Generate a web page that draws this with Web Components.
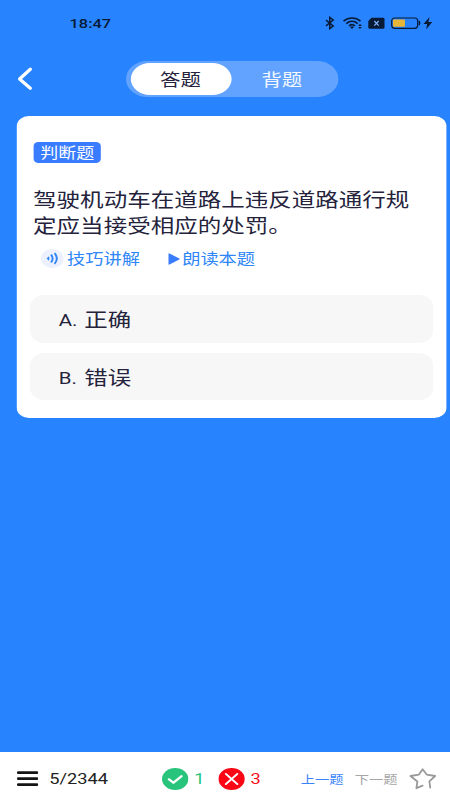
<!DOCTYPE html>
<html lang="zh-CN">
<head>
<meta charset="utf-8">
<meta name="viewport" content="width=device-width, initial-scale=1">
<title>答题</title>
<style>
  html, body { margin: 0; height: 100%; overflow: hidden; background: #2883ff; }
</style>
</head>
<body>
<quiz-screen>
  <status-bar time="18:47"></status-bar>
  <quiz-header></quiz-header>
  <question-card kind="判断题">
    驾驶机动车在道路上违反道路通行规定应当接受相应的处罚。
    <answer-option slot="answers" letter="A.">正确</answer-option>
    <answer-option slot="answers" letter="B.">错误</answer-option>
  </question-card>
  <quiz-footer slot="footer" progress="5/2344" right="1" wrong="3"></quiz-footer>
</quiz-screen>

<script>
(() => {
  const define = (name, render) => {
    customElements.define(name, class extends HTMLElement {
      connectedCallback() {
        if (this.shadowRoot) return;
        this.attachShadow({ mode: 'open' }).innerHTML = render(this);
      }
    });
  };

  // 375px layout, widened to fill a 450px viewport
  define('quiz-screen', () => `
    <style>
      :host {
        display: flex;
        flex-direction: column;
        width: 375px;
        height: 800px;
        transform: scaleX(1.2);
        transform-origin: 0 0;
        font-family: Roboto, "Noto Sans CJK SC", sans-serif;
        color: #25233c;
        background: #2883ff;
      }
      main { flex: 1; min-height: 0; }
    </style>
    <main><slot></slot></main>
    <slot name="footer"></slot>
  `);

  define('status-bar', (el) => `
    <style>
      :host {
        display: flex;
        align-items: center;
        justify-content: space-between;
        height: 46px;
        box-sizing: border-box;
        padding: 0 13.3px 0 58px;
        color: #071a36;
      }
      .time { font-size: 13.6px; font-weight: 500; line-height: 16px; }
      svg { display: block; width: 91.67px; height: 14px; }
    </style>
    <span class="time">${el.getAttribute('time')}</span>
    <svg viewBox="0 0 110 14" preserveAspectRatio="none" fill="none" stroke="currentColor" aria-hidden="true">
      <path d="M2 4.2 9.2 10 5.8 12.6V1.4L9.2 4 2 9.8" stroke-width="1.5"/>
      <path d="M19.5 5.2c5-4.3 12.2-4.3 17 0M22.3 7.6c3.5-2.9 8-2.9 11.4 0M25 9.9c2-1.6 4.2-1.6 6 0" stroke-width="1.7"/>
      <path d="m28 13-2-2c1.2-1 2.8-1 4 0ZM34.2 9.9 36 7.8l1.800 2.100ZM34.200 10.900 36 13l1.800-2.100Z" fill="currentColor" stroke="none"/>
      <path d="M47.5 1.800H59q1.500 0 1.500 1.400v8q0 1.500-1.500 1.500H46q-1.700 0-1.700-1.500V5Z" fill="currentColor" stroke="none"/>
      <path d="m50.300 5 4.400 4.600M54.700 5l-4.400 4.600" stroke="#80b6ff" stroke-width="1.200"/>
      <rect x="67.700" y="2" width="26" height="10.300" rx="3" stroke-width="1.200"/>
      <rect x="69" y="3.500" width="12" height="7.300" rx="1" fill="#e8b637" stroke="none"/>
      <path d="M95 5q1.300 2 0 4" stroke-width="1.500"/>
      <path d="m105.500 1-6 7h3.600l-.8 5.200 6-7.200h-3.800Z" fill="currentColor" stroke="none"/>
    </svg>
  `);

  define('quiz-header', () => `
    <style>
      :host {
        display: flex;
        align-items: center;
        height: 69.5px;
        box-sizing: border-box;
        padding: 0 0 4px 14px;
        font-size: 17px;
      }
      button { margin: 0; border: 0; padding: 0; color: inherit; background: none; font: inherit; }
      .back { width: 20px; height: 26px; margin-right: 70.6px; }
      svg { display: block; width: 20px; height: 26px; }
      .tabs {
        display: grid;
        grid-template-columns: 84.5px 84.5px;
        width: 177px;
        height: 36.5px;
        box-sizing: border-box;
        padding: 2.2px 4px;
        border-radius: 19px;
        background: #62a3ff;
      }
      .tabs button { border-radius: 17px; padding-right: 1px; color: #f2f7ff; }
      .tabs .active { color: #25233c; background: #fff; }
    </style>
    <button class="back" aria-label="返回">
      <svg viewBox="0 0 24 26" preserveAspectRatio="none" fill="none" stroke="#fff" stroke-width="3.3" stroke-linecap="round" stroke-linejoin="round" aria-hidden="true"><path d="M13.5 3.2 2.800 13l10.700 9.200"/></svg>
    </button>
    <div class="tabs">
      <button class="active">答题</button>
      <button>背题</button>
    </div>
  `);

  define('question-card', (el) => `
    <style>
      :host {
        display: block;
        box-sizing: border-box;
        width: 357.7px;
        height: 302px;
        margin-left: 14.2px;
        border-radius: 10px;
        padding: 26.5px 10.8px 0;
        background: #fff;
      }
      .kind {
        display: block;
        width: 56.7px;
        height: 20.5px;
        margin-left: 2.7px;
        border-radius: 4px;
        color: #fff;
        background: #397cff;
        font-size: 15px;
        line-height: 22px;
        text-align: center;
      }
      .text {
        margin: 25.7px 0 0 2.6px;
        width: 320px;
        font-size: 19.6px;
        line-height: 25.7px;
        word-break: break-all;
      }
      .tools {
        display: flex;
        align-items: center;
        height: 22px;
        margin: 8.3px 0 0 9px;
        color: #2f86f6;
        font-size: 15.2px;
        line-height: 22px;
      }
      .tools span { display: flex; align-items: center; }
      .tools span + span { margin-left: 23.7px; }
      .voice { width: 19.2px; height: 19px; margin-right: 2.7px; }
      .play { width: 10px; height: 12px; margin-right: 1.5px; }
      .answers { display: grid; gap: 10px; margin-top: 25.5px; }
    </style>
    <span class="kind">${el.getAttribute('kind')}</span>
    <div class="text"><slot></slot></div>
    <div class="tools">
      <span>
        <svg class="voice" viewBox="0 0 23 19" preserveAspectRatio="none" fill="none" stroke="#2f86f6" stroke-width="1.9" aria-hidden="true">
          <ellipse cx="11.5" cy="9.5" rx="11.5" ry="9.5" fill="#edf1fe" stroke="none"/>
          <path d="m5.800 9.500 2.400-2.200q1.200 2.200 0 4.400Z" fill="#2f86f6" stroke="none"/>
          <path d="M10.200 5.600q3.300 3.900 0 7.800M13.700 4.200q4.700 5.300 0 10.600"/>
        </svg>技巧讲解
      </span>
      <span>
        <svg class="play" viewBox="0 0 12 12" preserveAspectRatio="none" fill="#397cff" aria-hidden="true"><path d="M.5.800Q.5 0 1.500.5l9.800 4.900q.8.600 0 1.200l-9.800 4.900q-1 .5-1-.3Z"/></svg>朗读本题
      </span>
    </div>
    <div class="answers"><slot name="answers"></slot></div>
  `);

  define('answer-option', (el) => `
    <style>
      :host {
        display: flex;
        align-items: center;
        height: 47.5px;
        box-sizing: border-box;
        padding: 4px 24px 0;
        border-radius: 12px;
        background: #f7f7f7;
        font-size: 19.5px;
        line-height: 28px;
      }
      .letter { width: 21.3px; margin-top: -2px; font-size: 17px; }
    </style>
    <span class="letter">${el.getAttribute('letter')}</span>
    <span><slot></slot></span>
  `);

  define('quiz-footer', (el) => `
    <style>
      :host {
        display: flex;
        align-items: center;
        height: 48px;
        box-sizing: border-box;
        padding: 6px 11.5px 0 14px;
        background: #fff;
        color: #222;
        font-size: 15.2px;
        line-height: 20px;
      }
      svg { display: block; flex: none; }
      .menu { width: 18px; height: 16px; margin-right: 9px; }
      .progress { width: 94px; }
      .mark { width: 22px; height: 22px; margin-right: 5px; }
      .right { width: 20px; color: #28c47c; }
      .wrong { width: 42px; color: #fb1020; }
      .step { width: 45px; padding-top: 1px; font-size: 11.9px; white-space: nowrap; }
      .prev { color: #3c83fb; }
      .next { color: #a6a6a6; }
      .star { width: 23px; height: 23px; }
    </style>
    <svg class="menu" viewBox="0 0 22 16" preserveAspectRatio="none" stroke="#151515" stroke-width="2.7" stroke-linecap="round" aria-hidden="true"><path d="M1.500 1.700h19M1.500 7.700h19M1.500 13.700h19"/></svg>
    <span class="progress">${el.getAttribute('progress')}</span>
    <svg class="mark" viewBox="0 0 22 22" fill="none" stroke="#fff" stroke-width="2.200" stroke-linecap="round" stroke-linejoin="round" aria-hidden="true"><circle cx="11" cy="11" r="11" fill="#28c47c" stroke="none"/><path d="m5.800 11.300 3.700 3.500 6.700-6.600"/></svg>
    <span class="right">${el.getAttribute('right')}</span>
    <svg class="mark" viewBox="0 0 22 22" fill="none" stroke="#fff" stroke-width="1.700" stroke-linecap="round" aria-hidden="true"><circle cx="11" cy="11" r="11" fill="#fb0615" stroke="none"/><path d="m6.200 5.800 9.600 10.400M15.800 5.800 6.200 16.200"/></svg>
    <span class="wrong">${el.getAttribute('wrong')}</span>
    <span class="step prev">上一题</span>
    <span class="step next">下一题</span>
    <svg class="star" viewBox="0 0 28 23" preserveAspectRatio="none" fill="none" stroke="#999" stroke-width="1.800" stroke-linecap="round" stroke-linejoin="round" aria-hidden="true"><path d="M13.600 17.600 7.300 20.200l1-6.700L1.300 8l8.400-1.300 3.900-5.400 4.400 5.400L26.300 8l-5.800 5.300.8 6.400"/></svg>
  `);
})();
</script>
</body>
</html>
